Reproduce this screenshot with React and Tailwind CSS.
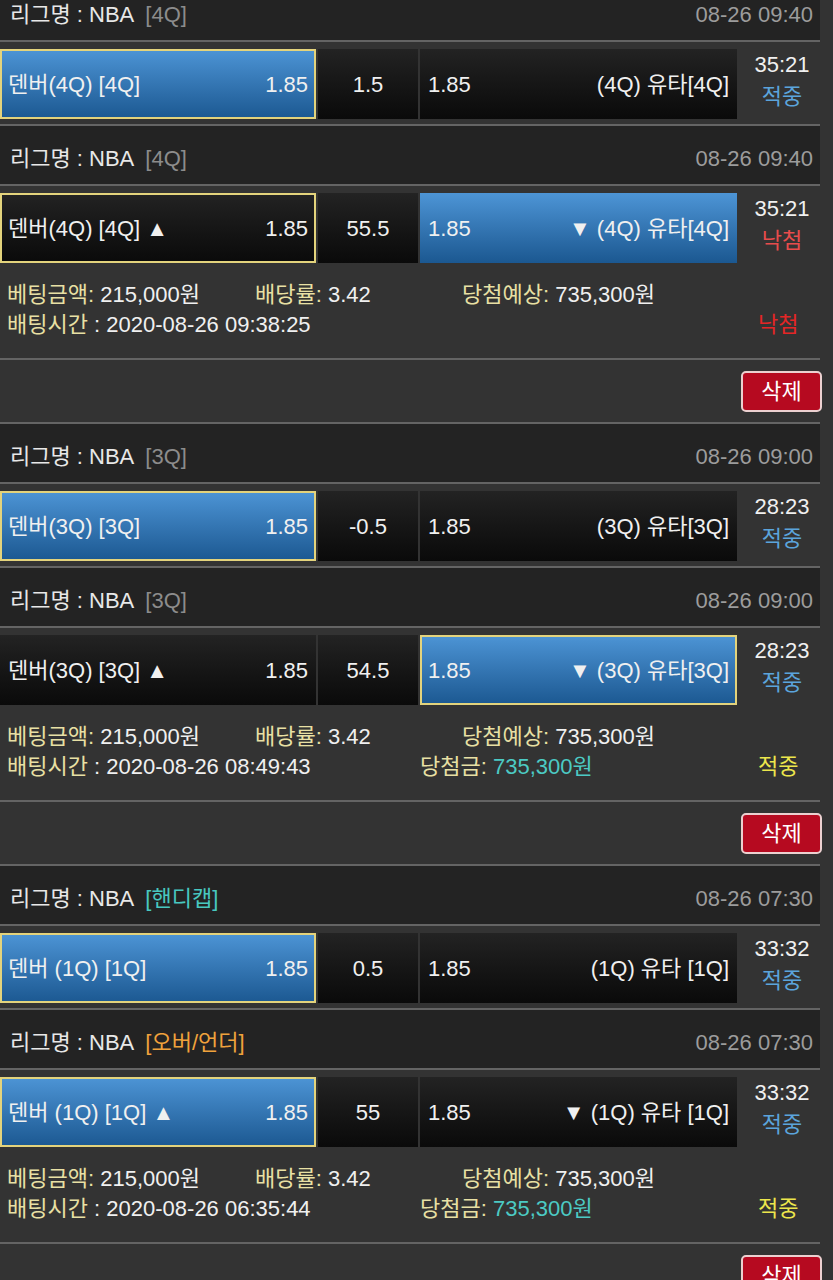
import React from 'react';

const groups = [
  {
    matches: [
      {
        tag: '[4Q]', tagColor: 'text-[#8c8c8c]', date: '08-26 09:40',
        left: { name: '덴버(4Q) [4Q]', odds: '1.85', blue: true, picked: true },
        mid: '1.5',
        right: { name: '(4Q) 유타[4Q]', odds: '1.85' },
        time: '35:21', status: '적중',
      },
      {
        tag: '[4Q]', tagColor: 'text-[#8c8c8c]', date: '08-26 09:40',
        left: { name: '덴버(4Q) [4Q] ▲', odds: '1.85', picked: true },
        mid: '55.5',
        right: { name: '▼ (4Q) 유타[4Q]', odds: '1.85', blue: true },
        time: '35:21', status: '낙첨',
      },
    ],
    bettime: '2020-08-26 09:38:25',
    won: false,
  },
  {
    matches: [
      {
        tag: '[3Q]', tagColor: 'text-[#8c8c8c]', date: '08-26 09:00',
        left: { name: '덴버(3Q) [3Q]', odds: '1.85', blue: true, picked: true },
        mid: '-0.5',
        right: { name: '(3Q) 유타[3Q]', odds: '1.85' },
        time: '28:23', status: '적중',
      },
      {
        tag: '[3Q]', tagColor: 'text-[#8c8c8c]', date: '08-26 09:00',
        left: { name: '덴버(3Q) [3Q] ▲', odds: '1.85' },
        mid: '54.5',
        right: { name: '▼ (3Q) 유타[3Q]', odds: '1.85', blue: true, picked: true },
        time: '28:23', status: '적중',
      },
    ],
    bettime: '2020-08-26 08:49:43',
    won: true,
  },
  {
    matches: [
      {
        tag: '[핸디캡]', tagColor: 'text-[#48c8c0]', date: '08-26 07:30',
        left: { name: '덴버 (1Q) [1Q]', odds: '1.85', blue: true, picked: true },
        mid: '0.5',
        right: { name: '(1Q) 유타 [1Q]', odds: '1.85' },
        time: '33:32', status: '적중',
      },
      {
        tag: '[오버/언더]', tagColor: 'text-[#f0a23c]', date: '08-26 07:30',
        left: { name: '덴버 (1Q) [1Q] ▲', odds: '1.85', blue: true, picked: true },
        mid: '55',
        right: { name: '▼ (1Q) 유타 [1Q]', odds: '1.85' },
        time: '33:32', status: '적중',
      },
    ],
    bettime: '2020-08-26 06:35:44',
    won: true,
  },
];

function Cell({ blue, picked, className, children }) {
  const bg = blue
    ? 'bg-linear-to-b from-[#4d95d6] to-[#1b5891]'
    : 'bg-linear-to-b from-[#232323] to-[#0a0a0a]';
  const ring = picked ? 'shadow-[inset_0_0_0_2px_#e3d37c]' : '';
  return (
    <div className={`h-[70px] flex items-center px-[8px] ${bg} ${ring} ${className}`}>
      {children}
    </div>
  );
}

function Match({ m, last }) {
  return (
    <div>
      <div className="h-[60px] pt-[6px] bg-[#232323] border-b-2 border-[#646464] flex items-center justify-between pl-[10px] pr-[7px]">
        <div className="text-[#e8e8e8]">
          리그명 : NBA<span className={`ml-[11px] ${m.tagColor}`}>{m.tag}</span>
        </div>
        <div className="text-[#9c9c9c]">{m.date}</div>
      </div>
      <div className={`flex pt-[7px] ${last ? '' : 'pb-[5px] border-b-2 border-[#646464]'}`}>
        <Cell blue={m.left.blue} picked={m.left.picked} className="w-[316px] justify-between">
          <span>{m.left.name}</span>
          <span>{m.left.odds}</span>
        </Cell>
        <Cell className="w-[100px] ml-[2px] justify-center">
          <span>{m.mid}</span>
        </Cell>
        <Cell blue={m.right.blue} picked={m.right.picked} className="w-[317px] ml-[2px] justify-between">
          <span>{m.right.odds}</span>
          <span>{m.right.name}</span>
        </Cell>
        <div className="flex-1 flex flex-col items-center pl-[7px] leading-[32px]">
          <span className="text-[#f0f0f0]">{m.time}</span>
          <span className={m.status === '낙첨' ? 'text-[#e84c4c]' : 'text-[#5ba4dc]'}>{m.status}</span>
        </div>
      </div>
    </div>
  );
}

function L({ children }) {
  return <span className="text-[#e8e0a4]">{children}</span>;
}

function Group({ g }) {
  return (
    <div>
      <Match m={g.matches[0]} />
      <Match m={g.matches[1]} last />
      <div className="h-[97px] pt-[17px] pl-[7px] border-b-2 border-[#646464] leading-[30px] text-[#f0f0f0]">
        <div className="flex">
          <span className="w-[248px]"><L>베팅금액:</L> 215,000원</span>
          <span className="w-[207px]"><L>배당률:</L> 3.42</span>
          <span><L>당첨예상:</L> 735,300원</span>
        </div>
        <div className="flex">
          <span className="w-[413px]"><L>배팅시간</L> : {g.bettime}</span>
          <span className="w-[338px]">
            {g.won && (
              <>
                <L>당첨금:</L> <span className="text-[#4ccac4]">735,300원</span>
              </>
            )}
          </span>
          <span className={g.won ? 'text-[#ece64c]' : 'text-[#e42626]'}>{g.won ? '적중' : '낙첨'}</span>
        </div>
      </div>
      <div className="h-[64px] border-b-2 border-[#646464] flex items-start justify-end pt-[11px]">
        <button className="w-[81px] h-[41px] -mr-[2px] rounded-[5px] border-2 border-[#ecd0d0] bg-[#b60a20] text-white text-[22px] leading-none">
          삭제
        </button>
      </div>
    </div>
  );
}

export default function App() {
  return (
    <div className="w-[833px] h-[1280px] overflow-hidden bg-[#333333] font-['Liberation_Sans','Noto_Sans_CJK_KR',sans-serif] text-[22px] text-[#f0f0f0]">
      <div className="w-[820px] -mt-[18px]">
        {groups.map((g, i) => (
          <Group key={i} g={g} />
        ))}
      </div>
    </div>
  );
}
